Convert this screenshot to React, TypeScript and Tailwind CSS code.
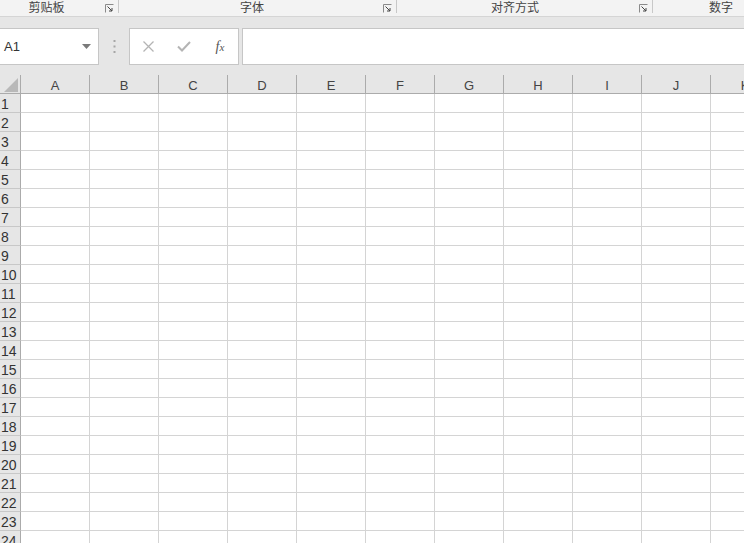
import React from "react";

const COLS = ["A", "B", "C", "D", "E", "F", "G", "H", "I", "J", "K"];
const ROWS = Array.from({ length: 24 }, (_, i) => i + 1);

const font = { fontFamily: '"Liberation Sans", "Noto Sans CJK SC", sans-serif' };

function Launcher() {
  return (
    <svg width="9" height="9" viewBox="0 0 9 9" className="shrink-0">
      <path d="M0.5 8.5V0.5H8.5" fill="none" stroke="#8a8a8a" strokeWidth="1" />
      <path d="M2.5 2.5L7 7M7 4V7H4" fill="none" stroke="#444" strokeWidth="1" />
    </svg>
  );
}

function RibbonGroup({
  label,
  width,
  pad,
  launcher = true,
}: {
  label: string;
  width: string;
  pad: string;
  launcher?: boolean;
}) {
  return (
    <div className={`flex h-full shrink-0 items-center ${width}`}>
      <div className={`flex-1 text-center text-[12px] leading-none text-[#444] ${pad}`}>{label}</div>
      {launcher && (
        <div className="mr-[4px] flex items-end self-stretch pb-[3px]">
          <Launcher />
        </div>
      )}
      {launcher && <div className="h-[13px] w-px self-start bg-[#c8c8c8]" />}
    </div>
  );
}

export default function App() {
  return (
    <div className="h-[543px] w-[744px] overflow-hidden bg-white" style={font}>
      {/* ribbon group labels */}
      <div className="flex h-[17px] border-b border-[#d5d5d5] bg-[#f3f3f3]">
        <RibbonGroup label="剪贴板" width="w-[119px]" pad="pr-[12px]" />
        <RibbonGroup label="字体" width="w-[278px]" pad="pl-[2px]" />
        <RibbonGroup label="对齐方式" width="w-[256px]" pad="pr-[6px]" />
        <RibbonGroup label="数字" width="w-[140px]" pad="pr-[4px]" launcher={false} />
      </div>
      <div className="h-[11px] bg-[#e6e6e6]" />

      {/* formula bar */}
      <div className="flex h-[37px] items-stretch bg-[#e6e6e6]">
        <div className="flex w-[99px] items-center justify-between border border-l-0 border-[#c6c6c6] bg-white pl-[4px] pr-[7px]">
          <span className="text-[13px] text-[#333]">A1</span>
          <svg width="9" height="5" viewBox="0 0 9 5">
            <path d="M0 0H9L4.5 5Z" fill="#7a7a7a" />
          </svg>
        </div>
        <div className="flex w-[30px] items-center justify-center">
          <svg width="3" height="13" viewBox="0 0 3 13">
            <rect x="0.5" y="0" width="2" height="2" fill="#a6a6a6" />
            <rect x="0.5" y="5.5" width="2" height="2" fill="#a6a6a6" />
            <rect x="0.5" y="11" width="2" height="2" fill="#a6a6a6" />
          </svg>
        </div>
        <div className="flex w-[110px] items-center border border-[#c6c6c6] bg-white">
          <div className="flex w-[36px] justify-center">
            <svg width="11" height="11" viewBox="0 0 11 11">
              <path d="M0.5 0.5L10.5 10.5M10.5 0.5L0.5 10.5" stroke="#b4b4b4" strokeWidth="1.3" />
            </svg>
          </div>
          <div className="flex w-[36px] justify-center">
            <svg width="14" height="11" viewBox="0 0 14 11">
              <path d="M1 5.5L5 9.5L13 1" fill="none" stroke="#b4b4b4" strokeWidth="2" />
            </svg>
          </div>
          <div className="flex w-[36px] justify-center">
            <span className="text-[14px] italic text-[#555]" style={{ fontFamily: '"Liberation Serif", serif' }}>
              f<span className="text-[11px]">x</span>
            </span>
          </div>
        </div>
        <div className="ml-[3px] flex-1 border border-r-0 border-[#c6c6c6] bg-white" />
      </div>
      <div className="h-[10px] bg-[#e6e6e6]" />

      {/* sheet */}
      <div className="grid grid-cols-[21px_repeat(11,69px)]">
        <div className="relative h-[19px] border-b border-r border-[#ababab] bg-[#e6e6e6]">
          <svg width="14" height="14" viewBox="0 0 14 14" className="absolute bottom-[1px] right-[2px]">
            <path d="M14 0V14H0Z" fill="#b9b9b9" />
          </svg>
        </div>
        {COLS.map((c) => (
          <div
            key={c}
            className="flex h-[19px] items-center justify-center border-b border-r border-[#ababab] bg-[#e6e6e6] pt-[3px] text-[13px] text-[#444]"
          >
            {c}
          </div>
        ))}
        {ROWS.map((r) => (
          <React.Fragment key={r}>
            <div className="flex h-[19px] items-center border-b border-r border-b-[#c8c8c8] border-r-[#ababab] bg-[#e6e6e6] pl-[1px] pt-[2px] text-[14px] text-[#333]">
              {r}
            </div>
            {COLS.map((c) => (
              <div key={c} className="h-[19px] border-b border-r border-[#d4d4d4]" />
            ))}
          </React.Fragment>
        ))}
      </div>
    </div>
  );
}
